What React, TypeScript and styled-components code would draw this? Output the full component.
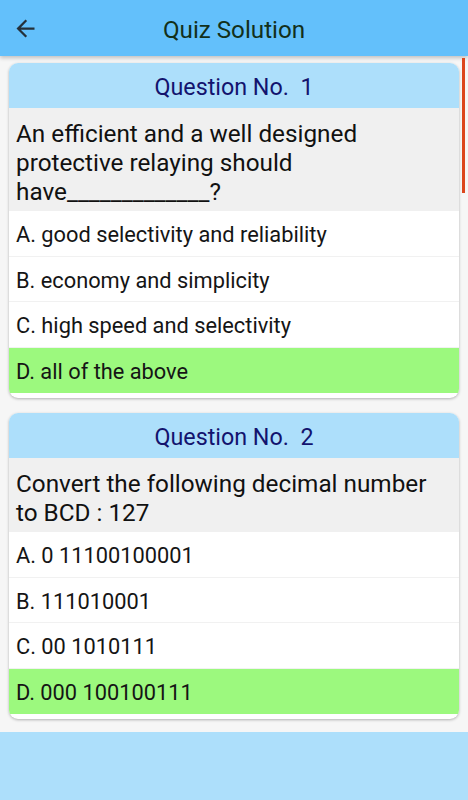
import React from "react";
import styled, { createGlobalStyle } from "styled-components";

const Global = createGlobalStyle`
  html, body { margin: 0; padding: 0; }
  body {
    background: #f5f5f5;
    font-family: Roboto, "Liberation Sans", Arial, sans-serif;
    -webkit-font-smoothing: antialiased;
  }
`;

const Screen = styled.div`
  width: 468px;
  height: 800px;
  display: flex;
  flex-direction: column;
  background: #f6f6f6;
  position: relative;
  overflow: hidden;
`;

const TopBar = styled.header`
  height: 56px;
  flex: 0 0 56px;
  background: #63c0fb;
  display: flex;
  align-items: center;
  position: relative;
  z-index: 2;
  box-shadow: 0 2px 4px rgba(0, 0, 0, 0.22);
`;

const BackButton = styled.button`
  width: 50px;
  height: 48px;
  border: 0;
  background: transparent;
  display: flex;
  align-items: center;
  justify-content: center;
  padding: 0;
  margin-top: 0;
  color: #24303a;
`;

const Title = styled.h1`
  flex: 1;
  margin: 3px 50px 0 0;
  text-align: center;
  font-size: 24.2px;
  font-weight: 400;
  color: #12301a;
`;

const Scroll = styled.main`
  flex: 1;
  padding: 7px 9px 0 9px;
  display: flex;
  flex-direction: column;
  gap: 15px;
  overflow: hidden;
`;

const ScrollThumb = styled.div`
  position: absolute;
  right: 3px;
  top: 58px;
  width: 3px;
  height: 135px;
  background: #dc461d;
  z-index: 3;
`;

const Card = styled.section`
  background: #ffffff;
  border-radius: 9px;
  overflow: hidden;
  box-shadow: 0 1px 3px rgba(0, 0, 0, 0.28);
  padding-bottom: 5px;
`;

const CardHead = styled.div`
  height: 45px;
  box-sizing: border-box;
  padding-top: 3px;
  background: #addffb;
  display: flex;
  align-items: center;
  justify-content: center;
  font-size: 23.3px;
  color: #13136e;
  white-space: pre;
`;

const Question = styled.div`
  background: #f0f0f0;
  padding: 11px 8px 5px 7px;
  font-size: 24.3px;
  line-height: 29px;
  color: #111;
`;

const Option = styled.div<{ $correct?: boolean }>`
  height: 45.5px;
  box-sizing: border-box;
  display: flex;
  align-items: center;
  padding: 3px 0 0 7px;
  font-size: 21.8px;
  color: #151515;
  background: ${(p) => (p.$correct ? "#9cf97e" : "#ffffff")};
  border-bottom: 1px solid ${(p) => (p.$correct ? "#9cf97e" : "#f1f1f1")};
  &:last-child { border-bottom: 0; }
`;

const Banner = styled.footer`
  height: 68px;
  flex: 0 0 68px;
  background: #addffb;
`;

const ArrowIcon = () => (
  <svg width="27" height="27" viewBox="0 0 24 24" fill="currentColor">
    <path d="M20 11H7.83l5.59-5.59L12 4l-8 8 8 8 1.41-1.41L7.83 13H20v-2z" />
  </svg>
);

type Q = { no: number; text: string; options: string[]; answer: number };

const questions: Q[] = [
  {
    no: 1,
    text: "An efficient and a well designed protective relaying should have_____________?",
    options: [
      "A. good selectivity and reliability",
      "B. economy and simplicity",
      "C. high speed and selectivity",
      "D. all of the above",
    ],
    answer: 3,
  },
  {
    no: 2,
    text: "Convert the following decimal number to BCD : 127",
    options: ["A. 0 11100100001", "B. 111010001", "C. 00 1010111", "D. 000 100100111"],
    answer: 3,
  },
];

export default function App() {
  return (
    <Screen>
      <Global />
      <TopBar>
        <BackButton aria-label="back">
          <ArrowIcon />
        </BackButton>
        <Title>Quiz Solution</Title>
      </TopBar>
      <ScrollThumb />
      <Scroll>
        {questions.map((q) => (
          <Card key={q.no}>
            <CardHead>{`Question No.  ${q.no}`}</CardHead>
            <Question>{q.text}</Question>
            {q.options.map((o, i) => (
              <Option key={o} $correct={i === q.answer}>
                {o}
              </Option>
            ))}
          </Card>
        ))}
      </Scroll>
      <Banner />
    </Screen>
  );
}
